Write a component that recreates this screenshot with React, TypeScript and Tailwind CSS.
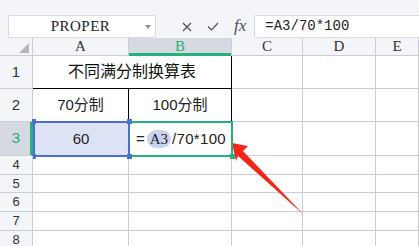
import React from "react";

const cjk = { fontFamily: '"Liberation Sans", "Noto Sans CJK SC", sans-serif' };
const mono = { fontFamily: '"Liberation Mono", "Noto Sans CJK SC", monospace' };
const serif = { fontFamily: '"Liberation Serif", "DejaVu Serif", serif' };

const cols = ["A", "B", "C", "D", "E"];
const smallRows = [4, 5, 6, 7, 8];

const HeaderCell: React.FC<{ label: string; active?: boolean }> = ({ label, active }) => (
	<div
		className={`relative flex items-center justify-center border-r border-b border-[#c9cdd8] text-[15px] ${active ? "bg-[#d6d9e2] text-[#1fae74]" : "bg-[#f4f5f8] text-[#333]"}`}
		style={serif}
	>
		{label}
		{active && <div className="absolute left-0 right-0 bottom-[-1px] h-[3px] bg-[#21b37a]" />}
	</div>
);

const RowHead: React.FC<{ n: number; active?: boolean; small?: boolean }> = ({ n, active, small }) => (
	<div
		className={`relative flex items-center justify-center border-r border-b border-[#c9cdd8] ${small ? "text-[13px]" : "text-[15px]"} ${active ? "bg-[#d6d9e2] text-[#1fae74]" : "bg-[#f4f5f8] text-[#333]"}`}
		style={cjk}
	>
		{n}
		{active && <div className="absolute top-0 bottom-0 right-[-1px] w-[3px] bg-[#21b37a]" />}
	</div>
);

const Empty: React.FC = () => <div className="border-r border-b border-[#c9cdd8]" />;

export default function App() {
	return (
		<div className="relative w-[419px] h-[246px] overflow-hidden bg-[#f4f5f8] flex flex-col select-none">
			{/* formula bar */}
			<div className="h-[47px] flex items-start pt-[15px] pl-[8px]">
				<div className="w-[148px] h-[23px] bg-white border border-[#d6d9df] rounded-[2px] flex items-center relative">
					<span className="flex-1 text-center text-[15px] text-[#222] pr-[3px] tracking-[0.5px]" style={serif}>
						PROPER
					</span>
					<svg className="absolute right-[4px] top-[9px]" width="6" height="4" viewBox="0 0 6 4">
						<path d="M0 0h6L3 4z" fill="#8a8f99" />
					</svg>
				</div>
				<div className="flex items-center h-[23px] ml-[26px] gap-[15px]">
					<svg width="10" height="10" viewBox="0 0 10 10">
						<path d="M1 1l8 8M9 1l-8 8" stroke="#4a4f5a" strokeWidth="1.2" fill="none" />
					</svg>
					<svg width="12" height="9" viewBox="0 0 12 9">
						<path d="M1 4.5l3.5 3.5L11 1" stroke="#4a4f5a" strokeWidth="1.2" fill="none" />
					</svg>
					<span className="text-[17px] italic text-[#4a4f5a] leading-none -mt-[2px]" style={serif}>
						fx
					</span>
				</div>
				<div className="ml-[8px] flex-1 h-[23px] bg-white border border-[#d6d9df] border-r-0 rounded-l-[2px] flex items-center pl-[10px] text-[14px] text-[#222]" style={mono}>
					=A3/70*100
				</div>
			</div>

			{/* sheet */}
			<div className="grid grid-cols-[33px_96px_103px_71px_73px_1fr] grid-rows-[18px_33px_33px_34px_19px_18px_19px_19px_19px] bg-white">
				{/* header row */}
				<div className="relative border-r border-b border-[#c9cdd8] bg-[#f4f5f8]">
					<svg className="absolute right-[3px] bottom-[2px]" width="10" height="10" viewBox="0 0 10 10">
						<path d="M10 0V10H0z" fill="#b4b7bd" />
					</svg>
				</div>
				{cols.map((c) => (
					<HeaderCell key={c} label={c} active={c === "B"} />
				))}

				{/* row 1 */}
				<RowHead n={1} />
				<div className="col-span-2 flex items-center justify-center border-r border-r-black border-b border-b-black text-[16px] text-[#111]" style={cjk}>
					不同满分制换算表
				</div>
				<Empty />
				<Empty />
				<Empty />

				{/* row 2 */}
				<RowHead n={2} />
				<div className="flex items-center justify-center border-r border-r-black border-b border-b-black text-[15px] text-[#222]" style={cjk}>
					70分制
				</div>
				<div className="flex items-center justify-center border-r border-r-black border-b border-b-black text-[15px] text-[#222]" style={cjk}>
					100分制
				</div>
				<Empty />
				<Empty />
				<Empty />

				{/* row 3 */}
				<RowHead n={3} active />
				<div className="relative flex items-center justify-center bg-[#dde3f5] text-[15px] text-[#222]" style={cjk}>
					60
					<div className="absolute left-0 right-[-1px] top-[-1px] bottom-[-1px] border-2 border-[#4a6fd2]" />
					<div className="absolute left-[-1px] top-[-3px] w-[4px] h-[5px] bg-[#4a6fd2]" />
					<div className="absolute right-[-3px] top-[-3px] w-[5px] h-[5px] bg-[#4a6fd2]" />
					<div className="absolute left-[-1px] bottom-[-3px] w-[4px] h-[5px] bg-[#4a6fd2]" />
					<div className="absolute right-[-3px] bottom-[-3px] w-[5px] h-[5px] bg-[#4a6fd2]" />
				</div>
				<div className="relative flex items-center pl-[7px] text-[15px] text-[#222] z-10" style={cjk}>
					<span>=</span>
					<span className="ml-[2px] mr-[1px] px-[3px] bg-[#c9d3f1] rounded-full text-[15px] leading-[18px]" style={serif}>
						A3
					</span>
					<span className="tracking-[0.3px]">/70*100</span>
					<div className="absolute left-[2px] right-[-1px] top-[-1px] bottom-[-1px] border-2 border-l-0 border-[#21b37a]" />
					<div className="absolute right-[-3px] bottom-[-3px] w-[5px] h-[5px] bg-[#21b37a]" />
				</div>
				<Empty />
				<Empty />
				<Empty />

				{smallRows.map((n) => (
					<React.Fragment key={n}>
						<RowHead n={n} small />
						<Empty />
						<Empty />
						<Empty />
						<Empty />
						<Empty />
					</React.Fragment>
				))}
			</div>

			{/* annotation arrow */}
			<svg className="absolute left-0 top-0 pointer-events-none" width="419" height="246" viewBox="0 0 419 246">
				<polygon points="232,143 248,146 243,151 304,215 238,156 236,161" fill="#f4261c" />
			</svg>
		</div>
	);
}
